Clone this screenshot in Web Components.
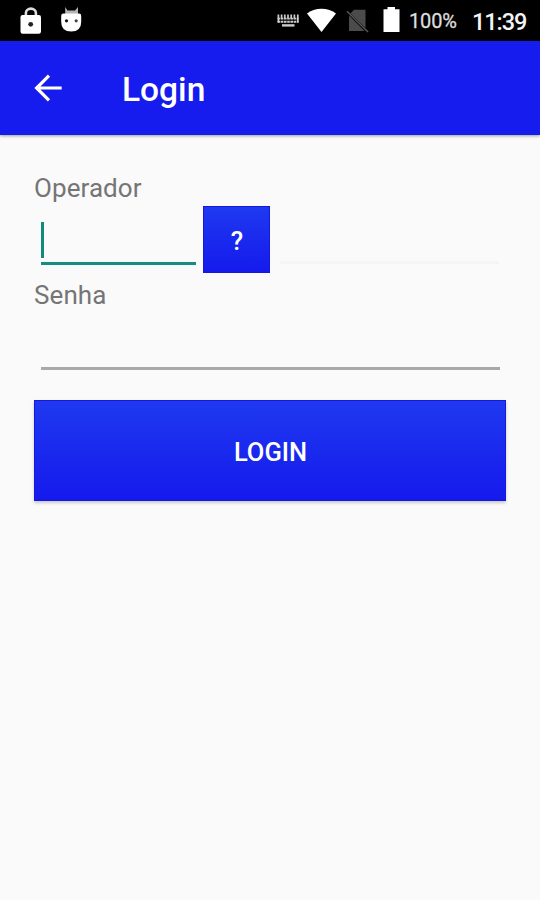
<!DOCTYPE html>
<html lang="pt">
<head>
<meta charset="utf-8">
<title>Login</title>
<style>
html,body{margin:0;height:100%;background:#fafafa}
body{font-family:Roboto,"Liberation Sans",sans-serif;overflow:hidden}
</style>
</head>
<body>
<login-screen></login-screen>
<script>
const define = (name, html) => customElements.define(name, class extends HTMLElement {
  constructor() {
    super();
    this.attachShadow({mode: 'open'}).innerHTML = html;
  }
});

define('status-bar', `
<style>
:host{display:flex;height:41px;background:#000;color:#eee;box-sizing:border-box;line-height:41px;white-space:nowrap}
svg{display:block;flex:none;height:41px}
.gap{flex:1}
.pct{font-size:20px;width:48px;margin:1px 0 0 7px;letter-spacing:-.15px;color:#ddd;-webkit-text-stroke:.3px #ddd}
.time{font-size:23.500px;font-weight:500;width:54px;margin:2px 14px 0 15px;letter-spacing:-1.050px;color:#f4f4f4}
</style>
<svg width="90" viewBox="0 0 90 41">
  <path d="M25.900 15v-2a5 4.400 0 0 1 10 0V15" fill="none" stroke="#ddd" stroke-width="2.600"/>
  <rect x="20.500" y="15" width="20.500" height="18.700" rx="2.200" fill="#fff"/>
  <circle cx="30.700" cy="24.300" r="2.400" fill="#222"/>
  <path d="M65.200 7 67.500 10.500h7.500L78 7V14H65.200z" fill="#b4b4b4"/>
  <path d="M63.500 13.500h15.500q2.200 0 2.200 2.200V22q0 9.500-10 9.500T61.200 22v-6.300q0-2.200 2.300-2.200z" fill="#fff"/>
  <circle cx="66.500" cy="20.800" r="1.600" fill="#111"/><circle cx="76.200" cy="20.800" r="1.600" fill="#444"/>
</svg>
<span class="gap"></span>
<svg width="126" viewBox="275 0 126 41">
  <path d="M277.400 14.500v8M280.600 14.500v4M283.800 14.500v4M287 14.500v4M290.200 14.500v4M293.400 14.500v4M296.800 14.500v8" stroke="#ccc" stroke-width="1.700"/>
  <path d="M276.600 18.600h21M276.600 21.800h21" stroke="#ccc" stroke-width="1.900" stroke-dasharray="2.600 .6"/>
  <path d="M281 25.400h12.500" stroke="#ccc" stroke-width="2.400"/>
  <path d="M306 13.600C313.500 7.200 327.500 7.200 335 13.600L320.500 32z" fill="#fff"/>
  <path d="M353 9.800h11.500v18.200L349.500 13.400zM348 15.300 363.600 31H348z" fill="#4b4b4b"/>
  <path d="M346 11.200 367 32" stroke="#555" stroke-width="1.600"/>
  <path d="M382.500 9.300h4V7h7.500v2.300h4.500V32h-16z" fill="#fff"/>
</svg>
<span class="pct">100%</span><span class="time">11:39</span>`);

define('app-bar', `
<style>
:host{display:flex;align-items:center;height:94px;background:#151ced;color:#fff;padding-left:34px;box-sizing:border-box;box-shadow:0 1px 3px rgba(0,0,0,.38);position:relative}
svg{display:block;width:28px;height:28px;margin-right:60px}
h1{font-size:33.500px;font-weight:500;line-height:40px;margin:3px 0 0}
</style>
<svg viewBox="0 0 28 28" fill="none" stroke="#fff" stroke-width="3.200"><path d="M27.700 14H2.500M15 1.600 2.600 14 15 26.400"/></svg>
<h1><slot></slot></h1>`);

define('field-label', `
<style>:host{display:block;font-size:26px;line-height:30px;height:30px;color:#757575;letter-spacing:.08px}</style><slot></slot>`);

define('text-field', `
<style>
:host{display:block;box-sizing:border-box;border-bottom:var(--line,2px solid #a3a3a3)}
i{display:none;width:3px;height:36px;background:#0f8a7c}
:host([focused]) i{display:block}
</style><i></i>`);

define('raised-button', `
<style>
:host{display:flex;align-items:center;justify-content:center;box-sizing:border-box;background:linear-gradient(#1f39f0,#151aec);border:1px solid #1419db;color:#fff;font-size:25.500px;font-weight:500;box-shadow:0 2px 3px rgba(0,0,0,.2)}
span{margin:2px 0 0 1px}
</style><span><slot></slot></span>`);

define('login-screen', `
<style>
:host{display:block;height:900px;background:#fafafa}
form{display:flex;flex-direction:column;padding:38px 34px 0}
.row{display:flex;height:67px;margin-top:3px}
.user{width:155px;height:43px;margin:16px 7px 0;--line:3px solid #168d80}
.help{width:67px;height:67px;box-shadow:none}
.name{flex:1;height:58px;margin:0 7px 0 10px;--line:3px solid #f5f5f5}
.second{margin-top:7px}
.pass{height:60px;margin:0 6px 0 7px;--line:3px solid #a9a9a9}
.go{height:101px;margin-top:30px}
</style>
<status-bar></status-bar>
<app-bar>Login</app-bar>
<form>
  <field-label>Operador</field-label>
  <div class="row">
    <text-field class="user" focused></text-field>
    <raised-button class="help">?</raised-button>
    <text-field class="name"></text-field>
  </div>
  <field-label class="second">Senha</field-label>
  <text-field class="pass"></text-field>
  <raised-button class="go">LOGIN</raised-button>
</form>`);
</script>
</body>
</html>
